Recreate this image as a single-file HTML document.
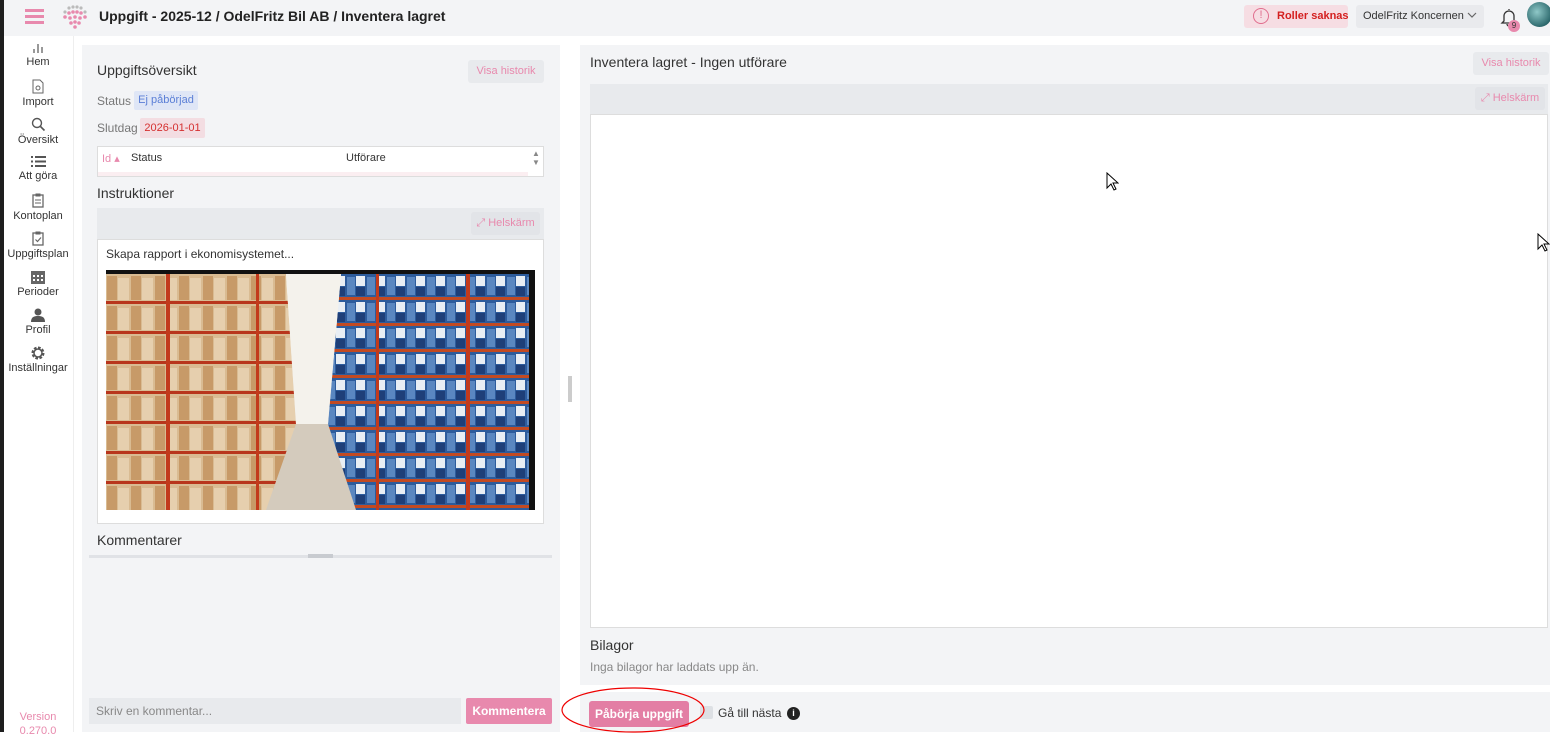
<!DOCTYPE html>
<html><head><meta charset="utf-8"><style>
*{box-sizing:border-box;margin:0;padding:0}
body{width:1550px;height:732px;overflow:hidden;background:#fff;font-family:"Liberation Sans",sans-serif;color:#333;position:relative;font-size:12px}
.abs{position:absolute}
.btn{position:absolute;background:#e8eaed;color:#e889ad;font-size:11px;border-radius:3px;text-align:center}
.nav{position:absolute;left:4px;width:68px;text-align:center;font-size:11px;color:#333}
.nav svg{display:block;margin:0 auto 2px}
</style></head><body>
<div class="abs" style="left:0;top:0;width:4px;height:732px;background:#1e1e1e"></div>
<div class="abs" style="left:4px;top:0;width:1546px;height:36px;background:#f3f4f6"></div>
<div class="abs" style="left:25px;top:9px;width:19px;height:3px;background:#e889ad;box-shadow:0 6px 0 #e889ad,0 12px 0 #e889ad"></div>
<svg class="abs" style="left:60px;top:4px" width="30" height="26" viewBox="0 0 30 26">
<g fill="#bbb"><circle cx="9" cy="4" r="1.6"/><circle cx="13" cy="3" r="1.6"/><circle cx="17" cy="3" r="1.6"/><circle cx="21" cy="4" r="1.6"/><circle cx="5" cy="8" r="1.6"/><circle cx="25" cy="8" r="1.6"/></g>
<g fill="#e889ad"><circle cx="9" cy="9" r="1.8"/><circle cx="13" cy="8" r="1.8"/><circle cx="17" cy="8" r="1.8"/><circle cx="21" cy="9" r="1.8"/><circle cx="5" cy="13" r="1.8"/><circle cx="10" cy="14" r="1.8"/><circle cx="15" cy="13" r="1.8"/><circle cx="20" cy="14" r="1.8"/><circle cx="25" cy="13" r="1.8"/><circle cx="11" cy="19" r="1.8"/><circle cx="15" cy="18" r="1.8"/><circle cx="19" cy="19" r="1.8"/><circle cx="15" cy="23" r="1.8"/></g></svg>
<div class="abs" style="left:99px;top:8px;font-size:14px;font-weight:bold;color:#222">Uppgift - 2025-12 / OdelFritz Bil AB / Inventera lagret</div>
<div class="abs" style="left:1244px;top:5px;width:104px;height:23px;background:#f6dde3;border-radius:3px"></div>
<div class="abs" style="left:1253px;top:8px;width:16px;height:16px;border:1.5px solid #e06e8e;border-radius:50%;color:#e06e8e;font-size:11px;text-align:center;line-height:13px">!</div>
<div class="abs" style="left:1277px;top:10px;font-size:11px;font-weight:bold;color:#d42020">Roller saknas</div>
<div class="abs" style="left:1356px;top:5px;width:128px;height:23px;background:#e9eaed;border-radius:3px"></div>
<div class="abs" style="left:1363px;top:10px;font-size:11px;color:#333">OdelFritz Koncernen</div>
<svg class="abs" style="left:1467px;top:12px" width="10" height="7"><path d="M1 1l4 4 4-4" fill="none" stroke="#666" stroke-width="1.2"/></svg>
<svg class="abs" style="left:1500px;top:7px" width="18" height="20" viewBox="0 0 18 20"><path d="M9 2v1M4 14V9a5 5 0 0110 0v5l2 2H2zM7 17a2 2 0 004 0" fill="none" stroke="#333" stroke-width="1.3"/></svg>
<div class="abs" style="left:1508px;top:20px;width:12px;height:12px;border-radius:50%;background:#e889ad;font-size:8px;text-align:center;line-height:12px;color:#333">9</div>
<div class="abs" style="left:1527px;top:2px;width:25px;height:25px;border-radius:50%;background:radial-gradient(circle at 40% 40%,#8fc8c8,#2e6a6e 70%,#1a3a3c)"></div>

<div class="abs" style="left:4px;top:36px;width:70px;height:696px;background:#fff;border-right:1px solid #eee"></div>
<div class="nav" style="top:42px"><svg width="12" height="12"><rect x="1" y="7" width="2" height="4" fill="#999"/><rect x="5" y="2" width="2" height="9" fill="#999"/><rect x="9" y="5" width="2" height="6" fill="#999"/></svg>Hem</div>
<div class="nav" style="top:79px"><svg width="12" height="15"><path d="M1 1h7l3 3v10H1z" fill="none" stroke="#666"/><circle cx="6" cy="9" r="2" fill="none" stroke="#666"/></svg>Import</div>
<div class="nav" style="top:117px"><svg width="15" height="15"><circle cx="6" cy="6" r="4.5" fill="none" stroke="#555" stroke-width="1.4"/><path d="M9.5 9.5l4 4" stroke="#555" stroke-width="1.6"/></svg>Översikt</div>
<div class="nav" style="top:155px"><svg width="15" height="13"><g fill="#555"><rect x="0" y="1" width="2" height="2"/><rect x="4" y="1" width="11" height="2"/><rect x="0" y="5.5" width="2" height="2"/><rect x="4" y="5.5" width="11" height="2"/><rect x="0" y="10" width="2" height="2"/><rect x="4" y="10" width="11" height="2"/></g></svg>Att göra</div>
<div class="nav" style="top:193px"><svg width="12" height="15"><rect x="1" y="2" width="10" height="12" fill="none" stroke="#666" stroke-width="1.3"/><rect x="3.5" y="0.5" width="5" height="3" fill="#666"/><path d="M3 7h6M3 10h6" stroke="#666"/></svg>Kontoplan</div>
<div class="nav" style="top:231px"><svg width="12" height="15"><rect x="1" y="2" width="10" height="12" fill="none" stroke="#666" stroke-width="1.3"/><rect x="3.5" y="0.5" width="5" height="3" fill="#666"/><path d="M3.5 8.5l2 2 3.5-4" stroke="#666" fill="none" stroke-width="1.2"/></svg>Uppgiftsplan</div>
<div class="nav" style="top:270px"><svg width="14" height="14"><rect x="0" y="1" width="14" height="13" fill="#666"/><g fill="#fff"><rect x="2" y="5" width="2" height="2"/><rect x="6" y="5" width="2" height="2"/><rect x="10" y="5" width="2" height="2"/><rect x="2" y="9" width="2" height="2"/><rect x="6" y="9" width="2" height="2"/><rect x="10" y="9" width="2" height="2"/></g></svg>Perioder</div>
<div class="nav" style="top:308px"><svg width="14" height="14"><circle cx="7" cy="4" r="3.5" fill="#555"/><path d="M0 14c0-5 3-6 7-6s7 1 7 6z" fill="#555"/></svg>Profil</div>
<div class="nav" style="top:346px"><svg width="14" height="14"><circle cx="7" cy="7" r="5" fill="none" stroke="#555" stroke-width="3" stroke-dasharray="2.5 1.4"/><circle cx="7" cy="7" r="4" fill="none" stroke="#555" stroke-width="1.5"/></svg>Inställningar</div>
<div class="abs" style="left:4px;top:710px;width:68px;text-align:center;font-size:11px;color:#e889ad;line-height:14px">Version<br>0.270.0</div>

<div class="abs" style="left:82px;top:45px;width:478px;height:687px;background:#f3f4f6"></div>
<div class="abs" style="left:97px;top:62px;font-size:14px;color:#333">Uppgiftsöversikt</div>
<div class="btn" style="left:468px;top:60px;width:76px;height:23px;line-height:23px">Visa historik</div>
<div class="abs" style="left:97px;top:94px;color:#777">Status</div>
<div class="abs" style="left:134px;top:91px;width:64px;height:19px;background:#dfe6f6;color:#5b7fd6;font-size:11px;line-height:19px;text-align:center;border-radius:2px">Ej påbörjad</div>
<div class="abs" style="left:97px;top:121px;color:#777">Slutdag</div>
<div class="abs" style="left:140px;top:118px;width:65px;height:20px;background:#f3dde2;color:#d53030;font-size:11px;line-height:20px;text-align:center;border-radius:2px">2026-01-01</div>
<div class="abs" style="left:97px;top:146px;width:447px;height:31px;background:#fff;border:1px solid #ddd"></div>
<div class="abs" style="left:98px;top:172px;width:430px;height:4px;background:#fbeef1"></div>
<div class="abs" style="left:102px;top:152px;font-size:11px;color:#e889ad">Id ▴</div>
<div class="abs" style="left:131px;top:152px;font-size:11px">Status</div>
<div class="abs" style="left:346px;top:152px;font-size:11px">Utförare</div>
<div class="abs" style="left:532px;top:149px;font-size:8px;color:#888;line-height:9px">▲<br>▼</div>
<div class="abs" style="left:97px;top:185px;font-size:14px">Instruktioner</div>
<div class="abs" style="left:97px;top:208px;width:447px;height:31px;background:#e8eaed"></div>
<div class="btn" style="left:471px;top:212px;width:69px;height:23px;line-height:23px;background:#e2e4e8">⤢ Helskärm</div>
<div class="abs" style="left:97px;top:239px;width:447px;height:285px;background:#fff;border:1px solid #ddd"></div>
<div class="abs" style="left:106px;top:247px;font-size:12px">Skapa rapport i ekonomisystemet...</div>
<div class="abs" style="left:106px;top:270px;width:429px;height:240px;background:#111"></div>
<svg class="abs" style="left:106px;top:274px" width="423" height="236" viewBox="0 0 423 236">
<defs>
<pattern id="lb" width="24" height="30" patternUnits="userSpaceOnUse"><rect width="24" height="30" fill="#d9bb92"/><rect x="1" y="2" width="10" height="24" fill="#c79a68"/><rect x="12" y="4" width="11" height="22" fill="#e6cfae"/><rect y="27" width="24" height="3" fill="#b8361c"/></pattern>
<pattern id="rb" width="20" height="26" patternUnits="userSpaceOnUse"><rect width="20" height="26" fill="#2d5c9c"/><rect x="1" y="3" width="8" height="18" fill="#5a87c0"/><rect x="10" y="2" width="9" height="10" fill="#e8eef4"/><rect x="10" y="13" width="9" height="9" fill="#1e3f78"/><rect y="23" width="20" height="3" fill="#c24a22"/></pattern>
<linearGradient id="ceil" x1="0" y1="0" x2="0" y2="1"><stop offset="0" stop-color="#fbfbf7"/><stop offset="1" stop-color="#c8c4bb"/></linearGradient>
</defs>
<rect width="423" height="236" fill="url(#ceil)"/>
<polygon points="0,0 180,0 190,150 180,236 0,236" fill="url(#lb)"/>
<polygon points="235,0 423,0 423,236 225,236 222,150" fill="url(#rb)"/>
<polygon points="180,0 235,0 222,150 190,150" fill="#f4f2ec"/>
<polygon points="190,150 222,150 250,236 160,236" fill="#d4cbbd"/>
<rect x="60" y="0" width="4" height="236" fill="#c23a1c"/><rect x="150" y="0" width="3" height="236" fill="#c23a1c"/>
<rect x="270" y="0" width="3" height="236" fill="#c23a1c"/><rect x="360" y="0" width="4" height="236" fill="#c23a1c"/>
</svg>
<div class="abs" style="left:97px;top:532px;font-size:14px">Kommentarer</div>
<div class="abs" style="left:89px;top:555px;width:463px;height:3px;background:#e0e2e6"></div>
<div class="abs" style="left:308px;top:554px;width:25px;height:4px;background:#c8cbd0"></div>
<div class="abs" style="left:89px;top:698px;width:372px;height:26px;background:#e8eaed"></div>
<div class="abs" style="left:96px;top:704px;font-size:12px;color:#888">Skriv en kommentar...</div>
<div class="abs" style="left:466px;top:698px;width:86px;height:26px;background:#e889ad;color:#fff;font-weight:bold;font-size:12px;line-height:26px;text-align:center;border-radius:2px">Kommentera</div>

<div class="abs" style="left:568px;top:376px;width:4px;height:26px;background:#ccc"></div>
<div class="abs" style="left:580px;top:45px;width:970px;height:640px;background:#f3f4f6"></div>
<div class="abs" style="left:590px;top:54px;font-size:14px">Inventera lagret - Ingen utförare</div>
<div class="btn" style="left:1473px;top:52px;width:76px;height:23px;line-height:23px">Visa historik</div>
<div class="abs" style="left:590px;top:84px;width:958px;height:30px;background:#e8eaed"></div>
<div class="btn" style="left:1475px;top:87px;width:70px;height:23px;line-height:23px;background:#e2e4e8">⤢ Helskärm</div>
<div class="abs" style="left:590px;top:114px;width:958px;height:514px;background:#fff;border:1px solid #ddd"></div>
<div class="abs" style="left:590px;top:637px;font-size:14px">Bilagor</div>
<div class="abs" style="left:590px;top:660px;font-size:12px;color:#888">Inga bilagor har laddats upp än.</div>
<div class="abs" style="left:580px;top:692px;width:970px;height:40px;background:#f3f4f6"></div>
<div class="abs" style="left:589px;top:701px;width:100px;height:26px;background:#e37ea4;color:#fff;font-weight:bold;font-size:12px;line-height:26px;text-align:center;border-radius:3px">Påbörja uppgift</div>
<div class="abs" style="left:700px;top:706px;width:13px;height:13px;background:#dde0e4;border-radius:2px"></div>
<div class="abs" style="left:718px;top:706px;font-size:12px">Gå till nästa</div>
<div class="abs" style="left:787px;top:707px;width:13px;height:13px;border-radius:50%;background:#222;color:#fff;font-size:9px;font-weight:bold;text-align:center;line-height:13px">i</div>
<svg class="abs" style="left:560px;top:684px" width="150" height="50"><ellipse cx="73" cy="26" rx="71" ry="22" fill="none" stroke="#e00" stroke-width="1.2"/></svg>
<svg class="abs" style="left:1106px;top:172px" width="13" height="20"><path d="M1 1v15l4-4 3 6 2-1-3-6h5z" fill="#fff" stroke="#000"/></svg>
<svg class="abs" style="left:1537px;top:233px" width="13" height="20"><path d="M1 1v15l4-4 3 6 2-1-3-6h5z" fill="#fff" stroke="#000"/></svg>
</body></html>
